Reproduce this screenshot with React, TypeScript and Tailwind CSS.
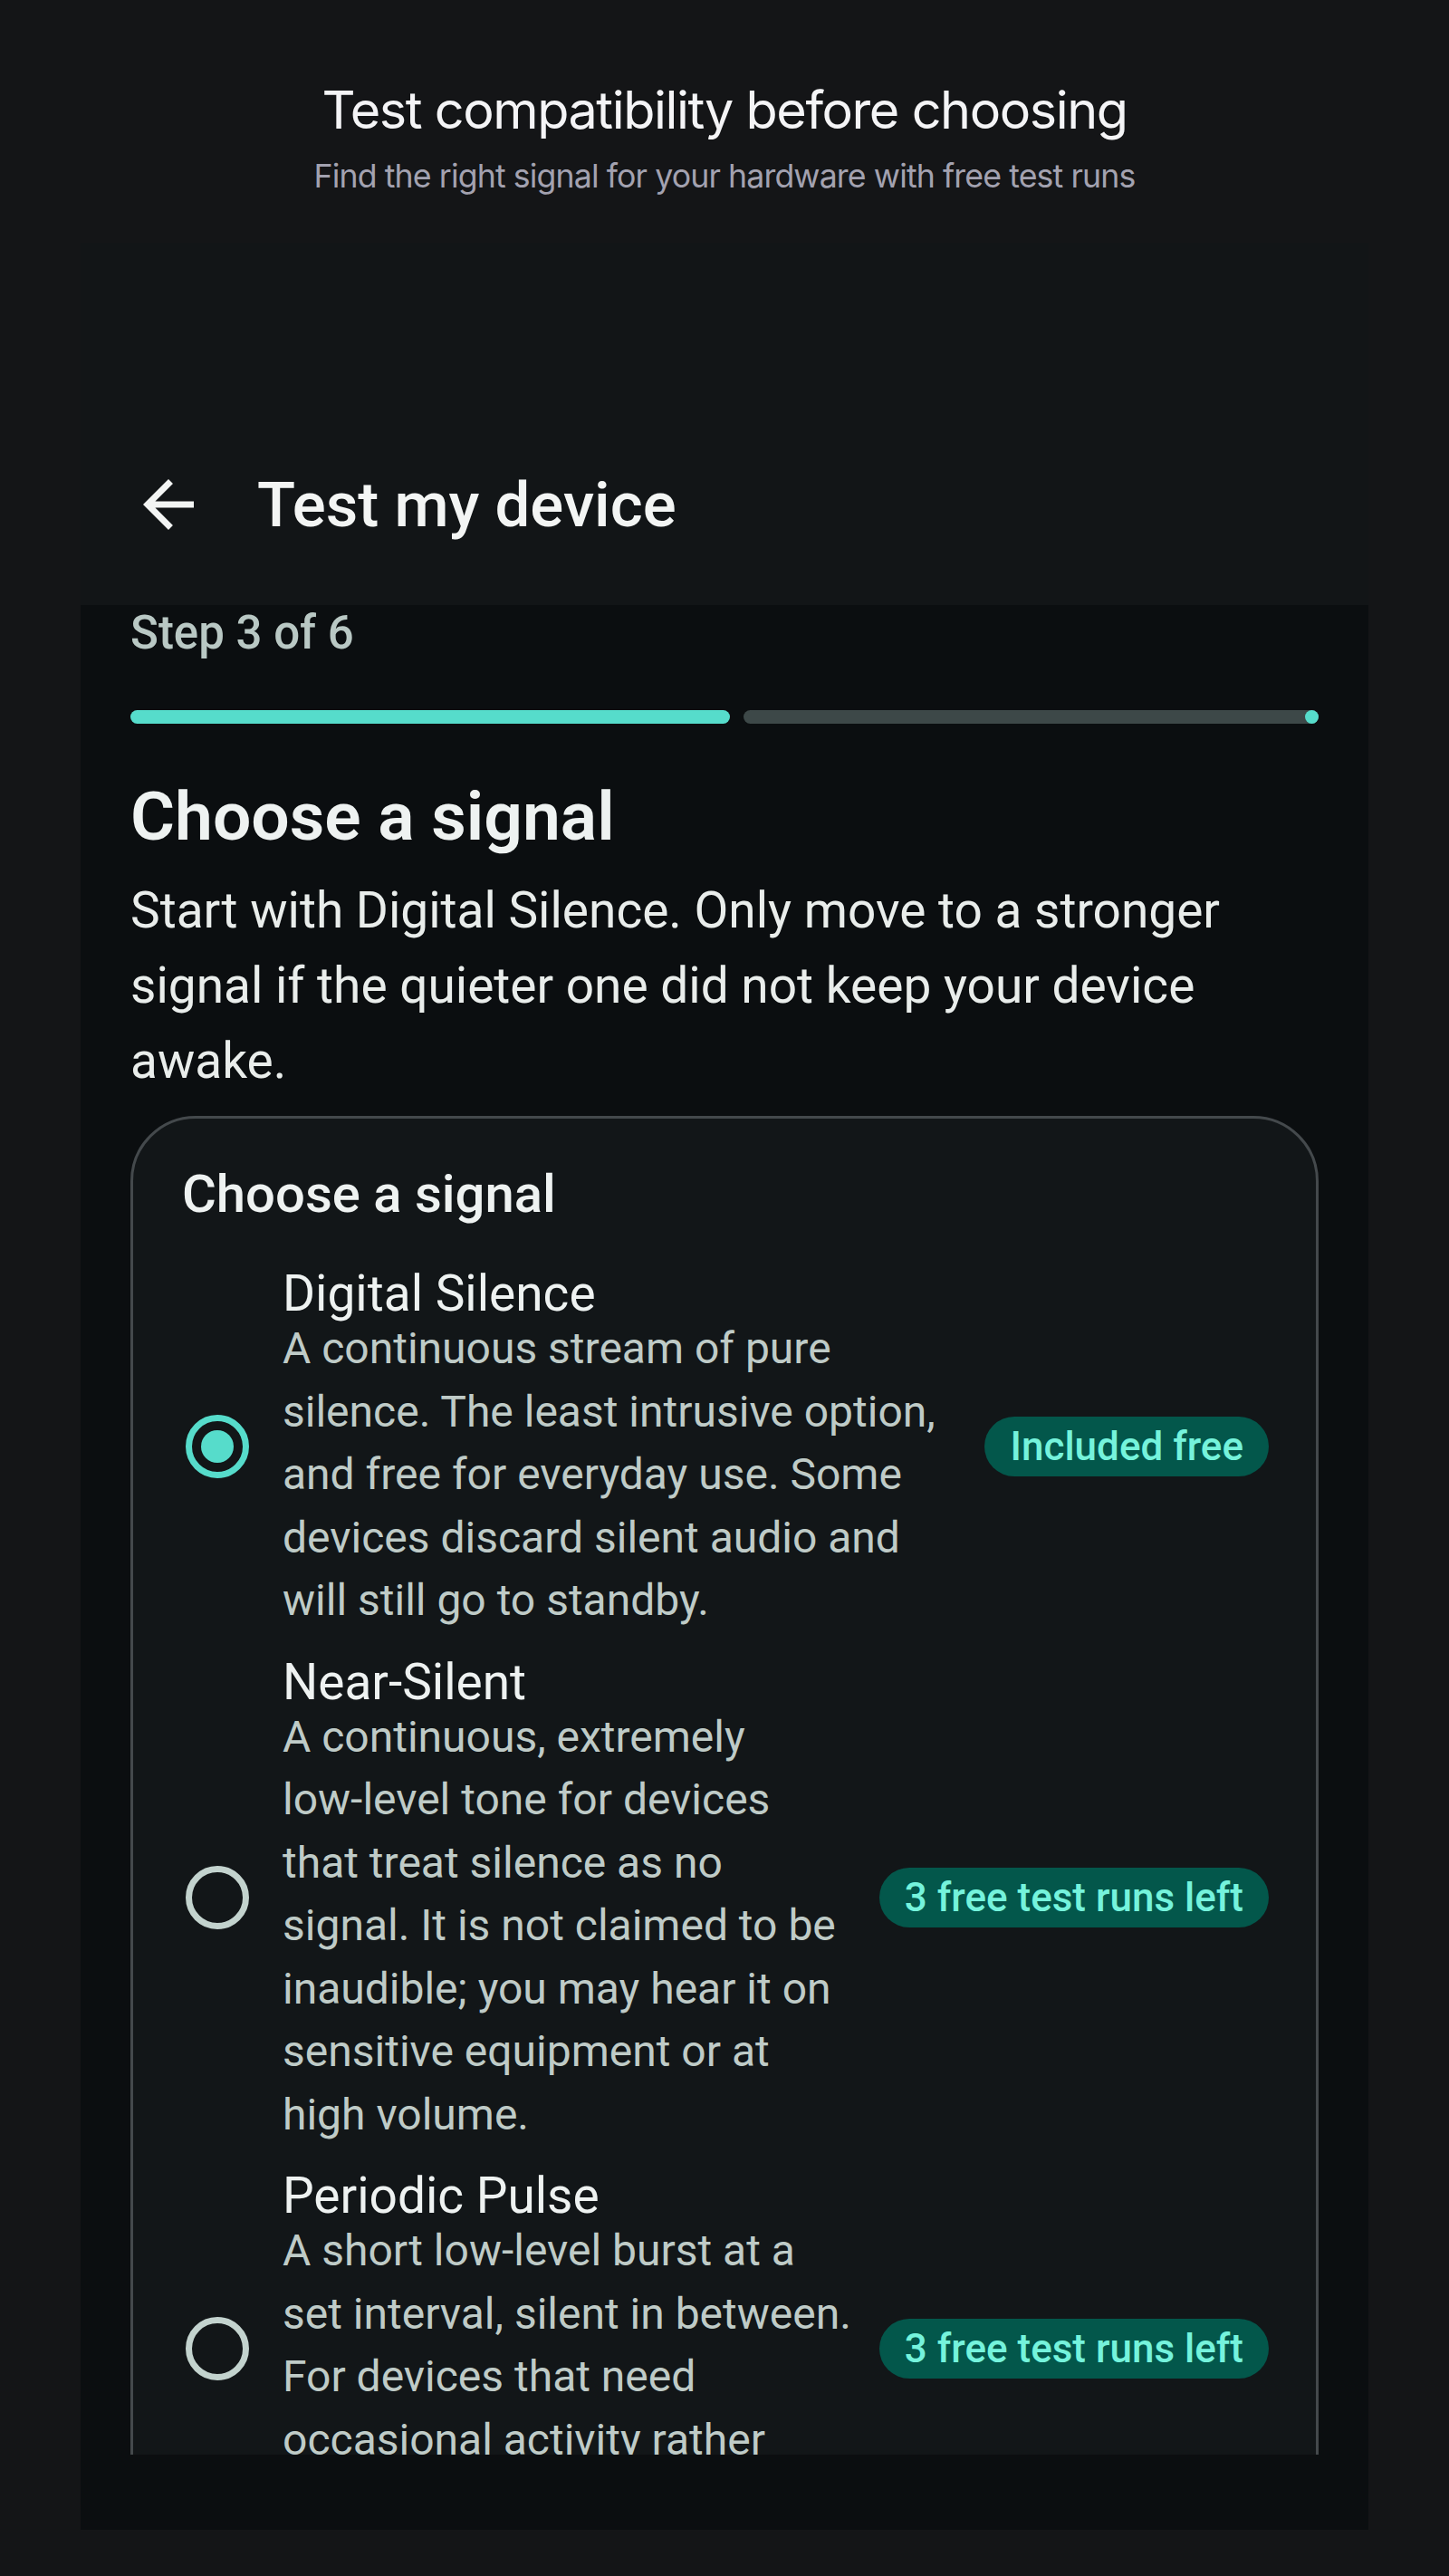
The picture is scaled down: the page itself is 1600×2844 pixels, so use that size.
import type { ReactNode } from "react";

const nb = (t: string) => <span className="whitespace-nowrap">{t}</span>;

const signals: { name: string; desc: ReactNode; badge: string; selected: boolean }[] = [
  {
    name: "Digital Silence",
    desc: "A continuous stream of pure silence. The least intrusive option, and free for everyday use. Some devices discard silent audio and will still go to standby.",
    badge: "Included free",
    selected: true,
  },
  {
    name: "Near-Silent",
    desc: (
      <>
        A continuous, extremely {nb("low-level")} tone for devices that treat silence as no signal. It is not
        claimed to be inaudible; you may hear it on sensitive equipment or at high volume.
      </>
    ),
    badge: "3 free test runs left",
    selected: false,
  },
  {
    name: "Periodic Pulse",
    desc: (
      <>
        A short {nb("low-level")} burst at a set interval, silent in between. For devices that need occasional
        activity rather than a constant signal.
      </>
    ),
    badge: "3 free test runs left",
    selected: false,
  },
];

function BackArrow() {
  return (
    <svg width="84" height="84" viewBox="0 0 24 24" fill="currentColor" aria-hidden>
      <path d="M20 11H7.83l5.59-5.59L12 4l-8 8 8 8 1.41-1.41L7.83 13H20v-2z" />
    </svg>
  );
}

function Radio({ on }: { on: boolean }) {
  return (
    <div className="mb-[11px] flex w-[78px] shrink-0 items-center justify-center">
      <div
        className={
          on
            ? "flex h-[70px] w-[70px] items-center justify-center rounded-full border-[7px] border-[#56dccb]"
            : "h-[70px] w-[70px] rounded-full border-[7px] border-[#c3d3ce]"
        }
      >
        {on && <div className="h-[36px] w-[36px] rounded-full bg-[#56dccb]" />}
      </div>
    </div>
  );
}

export default function App() {
  return (
    <div className="min-h-[2844px] bg-[#141517] font-[Roboto,sans-serif]">
      <header className="text-center font-[Inter,sans-serif]">
        <h1 className="pt-[86px] text-[57.5px] leading-[70px] tracking-[-0.025em] text-[#f4f4f6]">
          Test compatibility before choosing
        </h1>
        <p className="mt-[16px] text-[35.7px] leading-[44px] tracking-[-0.025em] text-[#a3a2b0]">
          Find the right signal for your hardware with free test runs
        </p>
      </header>

      <div className="mx-auto mt-[52px] flex h-[2525px] w-[1422px] flex-col bg-[#0b0e10]">
        <div className="flex h-[400px] shrink-0 flex-col justify-end bg-[#121517] pb-[55px] pl-[55px]">
          <div className="flex h-[112px] items-center gap-[56px] text-[#f3f5f4]">
            <BackArrow />
            <span className="text-[69px] font-medium leading-none">Test my device</span>
          </div>
        </div>

        <div className="h-[2042px] shrink-0 overflow-hidden px-[55px]">
          <div className="text-[51px] font-medium leading-[61px] text-[#b9c8c4]">Step 3 of 6</div>

          <div className="mt-[55px] flex h-[15px] gap-[15px]">
            <div className="w-[662px] rounded-full bg-[#56dccb]" />
            <div className="relative flex-1 rounded-full bg-[#3d4848]">
              <div className="absolute right-0 top-0 h-[15px] w-[15px] rounded-full bg-[#56dccb]" />
            </div>
          </div>

          <h2 className="mt-[58px] text-[75px] font-semibold leading-[88px] text-[#eef2f1]">
            Choose a signal
          </h2>
          <p className="mt-[19px] text-[55px] leading-[83px] text-[#e9edeb]">
            Start with Digital Silence. Only move to a stronger signal if the quieter one did not keep your device awake.
          </p>

          <div className="mt-[19px] rounded-[72px] border-[3px] border-[#44494c] bg-[#121618] pb-[160px] pl-[54px] pr-[52px] pt-[49px]">
            <h3 className="text-[58px] font-medium leading-[68px] text-[#eef2f1]">Choose a signal</h3>
            <div className="mt-[51px] flex flex-col gap-[30px]">
              {signals.map((s) => (
                <div key={s.name} className="flex items-center">
                  <Radio on={s.selected} />
                  <div className="ml-[33px] mr-[30px] flex-1">
                    <div className="text-[55px] leading-[51px] text-[#eef2f1]">{s.name}</div>
                    <div className="text-[48px] leading-[69.5px] text-[#bfcbc7]">{s.desc}</div>
                  </div>
                  <span className="mb-[11px] shrink-0 rounded-full bg-[#03574b] px-[28px] text-[44px] font-medium leading-[66px] text-[#75f3dc]">
                    {s.badge}
                  </span>
                </div>
              ))}
            </div>
          </div>
        </div>
      </div>
    </div>
  );
}
